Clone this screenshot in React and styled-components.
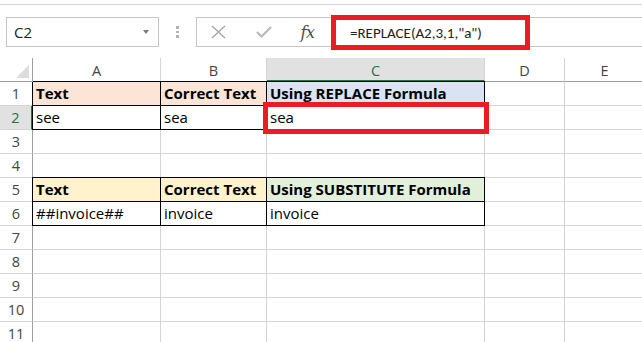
import React from "react";
import styled, { createGlobalStyle } from "styled-components";

const GlobalStyle = createGlobalStyle`
  html, body {
    margin: 0;
    padding: 0;
    background: #ffffff;
  }
  body {
    font-family: "Open Sans", "Noto Sans", sans-serif;
  }
`;

const Sheet = styled.div`
  width: 642px;
  height: 342px;
  overflow: hidden;
  background: #ffffff;
`;

const TopRule = styled.div`
  height: 4px;
  border-bottom: 1px solid #d4d4d4;
`;

const FormulaRow = styled.div`
  display: flex;
  align-items: center;
  height: 30px;
  margin: 12px 0 11px 6px;
`;

const NameBox = styled.div`
  box-sizing: border-box;
  width: 153px;
  height: 30px;
  border: 1px solid #c6c6c6;
  display: flex;
  align-items: center;
  justify-content: space-between;
  padding: 0 9px 0 7px;
  font-size: 15px;
  color: #222;
`;

const DropArrow = styled.span`
  width: 0;
  height: 0;
  border-left: 3.5px solid transparent;
  border-right: 3.5px solid transparent;
  border-top: 4px solid #7a7a7a;
`;

const Grip = styled.div`
  width: 37px;
  display: flex;
  flex-direction: column;
  align-items: center;
  gap: 2px;
  span {
    width: 3px;
    height: 2.5px;
    background: #b4b4b4;
  }
`;

const FormulaBox = styled.div`
  box-sizing: border-box;
  flex: 1;
  height: 30px;
  border: 1px solid #c6c6c6;
  border-right: none;
  display: flex;
  align-items: flex-start;
`;

const IconSlot = styled.div`
  width: ${(p) => p.$w}px;
  height: 28px;
  display: flex;
  align-items: center;
  justify-content: center;
  color: #a6a6a6;
`;

const Fx = styled.span`
  font-family: "DejaVu Serif", "Liberation Serif", serif;
  font-style: italic;
  font-size: 16px;
  color: #4a4a4a;
  letter-spacing: -0.5px;
`;

const FormulaText = styled.div`
  box-sizing: border-box;
  margin: 2px 0 0 9px;
  width: 189px;
  height: 25px;
  outline: 5px solid #ec1c24;
  padding-left: 14px;
  display: flex;
  align-items: center;
  font-family: Carlito, Lato, sans-serif;
  font-size: 15px;
  color: #222;
`;

const Grid = styled.div`
  display: grid;
  grid-template-columns: 33px 128px 106px 218px 80px 80px;
  grid-auto-rows: 24px;
`;

const Corner = styled.div`
  box-sizing: border-box;
  position: relative;
  border-right: 1px solid #9e9e9e;
  border-bottom: 1px solid #9e9e9e;
  background: #ffffff;
  &::after {
    content: "";
    position: absolute;
    right: 3px;
    bottom: 3px;
    border-left: 13px solid transparent;
    border-bottom: 13px solid #dcdcdc;
  }
`;

const ColHead = styled.div`
  box-sizing: border-box;
  display: flex;
  align-items: center;
  justify-content: center;
  padding-top: 2px;
  font-size: 14.5px;
  color: ${(p) => (p.$active ? "#217346" : "#444")};
  background: ${(p) => (p.$active ? "#e1e1e1" : "#ffffff")};
  border-right: 1px solid #d4d4d4;
  border-bottom: ${(p) => (p.$active ? "2px solid #217346" : "1px solid #9e9e9e")};
`;

const RowHead = styled.div`
  box-sizing: border-box;
  display: flex;
  align-items: flex-end;
  justify-content: center;
  padding-bottom: 2px;
  font-size: 14.5px;
  line-height: 18px;
  color: ${(p) => (p.$active ? "#217346" : "#444")};
  background: ${(p) => (p.$active ? "#e1e1e1" : "#ffffff")};
  border-bottom: 1px solid #d4d4d4;
  border-right: ${(p) => (p.$active ? "2px solid #217346" : "1px solid #9e9e9e")};
`;

const shadows = (p) => {
  const list = [];
  if (p.$top) list.push("0 -1px 0 #000");
  if (p.$left) list.push("-1px 0 0 #000");
  if (p.$top && p.$left) list.push("-1px -1px 0 #000");
  return list.length ? list.join(", ") : "none";
};

const Cell = styled.div`
  box-sizing: border-box;
  position: ${(p) => (p.$marked ? "relative" : "static")};
  z-index: ${(p) => (p.$marked ? 1 : "auto")};
  display: flex;
  align-items: flex-end;
  padding: 0 0 2px 3px;
  white-space: nowrap;
  overflow: visible;
  font-family: "Open Sans", "Noto Sans", sans-serif;
  font-size: 15px;
  line-height: 19px;
  font-weight: ${(p) => (p.$bold ? 700 : 400)};
  color: #000;
  background: ${(p) => p.$fill || "#ffffff"};
  border-right: 1px solid ${(p) => (p.$box ? "#000" : "#d4d4d4")};
  border-bottom: 1px solid ${(p) => (p.$box ? "#000" : "#d4d4d4")};
  box-shadow: ${shadows};
  outline: ${(p) => (p.$marked ? "5px solid #ec1c24" : "none")};
  outline-offset: -1px;
`;

const XIcon = () => (
  <svg width="15" height="14" viewBox="0 0 15 14">
    <path d="M1 1 L14 13 M14 1 L1 13" stroke="currentColor" strokeWidth="1.4" fill="none" />
  </svg>
);

const CheckIcon = () => (
  <svg width="16" height="12" viewBox="0 0 16 12">
    <path d="M1 6 L5.5 10.5 L15 1" stroke="#b9b9b9" strokeWidth="2.2" fill="none" />
  </svg>
);

const columns = ["A", "B", "C", "D", "E"];

const peach = "#fce4d6";
const blue = "#dae3f3";
const yellow = "#fff2cc";
const green = "#e2efda";

const rows = {
  1: [
    { text: "Text", bold: true, fill: peach, box: true, top: true, left: true },
    { text: "Correct Text", bold: true, fill: peach, box: true, top: true },
    { text: "Using REPLACE Formula", bold: true, fill: blue, box: true, top: true },
  ],
  2: [
    { text: "see", box: true, left: true },
    { text: "sea", box: true },
    { text: "sea", box: true, marked: true },
  ],
  5: [
    { text: "Text", bold: true, fill: yellow, box: true, top: true, left: true },
    { text: "Correct Text", bold: true, fill: yellow, box: true, top: true },
    { text: "Using SUBSTITUTE Formula", bold: true, fill: green, box: true, top: true },
  ],
  6: [
    { text: "##invoice##", box: true, left: true },
    { text: "invoice", box: true },
    { text: "invoice", box: true },
  ],
};

export default function App() {
  const rowNums = Array.from({ length: 11 }, (_, i) => i + 1);
  return (
    <Sheet>
      <GlobalStyle />
      <TopRule />
      <FormulaRow>
        <NameBox>
          <span>C2</span>
          <DropArrow />
        </NameBox>
        <Grip>
          <span />
          <span />
          <span />
        </Grip>
        <FormulaBox>
          <IconSlot $w={43}>
            <XIcon />
          </IconSlot>
          <IconSlot $w={48}>
            <CheckIcon />
          </IconSlot>
          <IconSlot $w={39}>
            <Fx>fx</Fx>
          </IconSlot>
          <FormulaText>=REPLACE(A2,3,1,"a")</FormulaText>
        </FormulaBox>
      </FormulaRow>
      <Grid>
        <Corner />
        {columns.map((c) => (
          <ColHead key={c} $active={c === "C"}>
            {c}
          </ColHead>
        ))}
        {rowNums.map((r) => {
          const cells = rows[r] || [];
          return (
            <React.Fragment key={r}>
              <RowHead $active={r === 2}>{r}</RowHead>
              {columns.map((c, i) => {
                const cell = cells[i] || {};
                return (
                  <Cell
                    key={c}
                    $bold={cell.bold}
                    $fill={cell.fill}
                    $box={cell.box}
                    $top={cell.top}
                    $left={cell.left}
                    $marked={cell.marked}
                  >
                    {cell.text}
                  </Cell>
                );
              })}
            </React.Fragment>
          );
        })}
      </Grid>
    </Sheet>
  );
}
